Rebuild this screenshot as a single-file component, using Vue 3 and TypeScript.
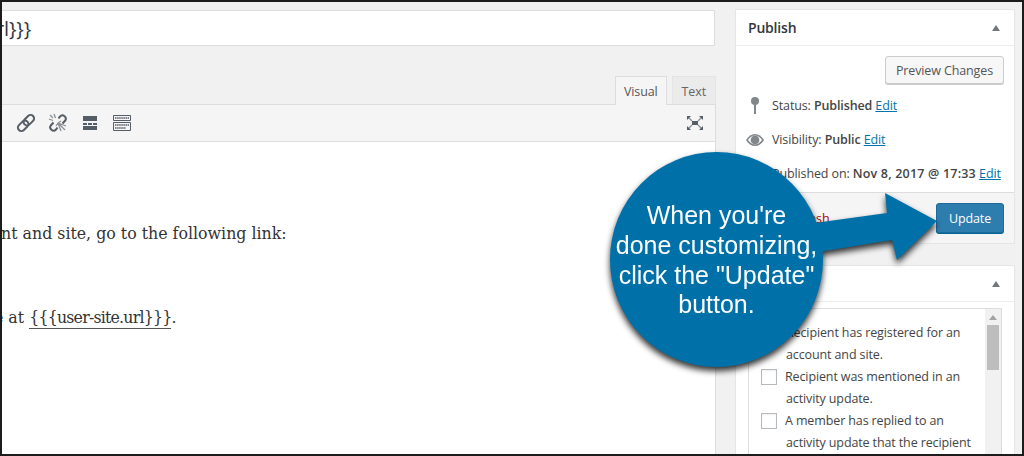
<script setup lang="ts">
interface Item { first: string; rest?: string }
const items: Item[] = [
  { first: 'Recipient was mentioned in an', rest: 'activity update.' },
  { first: 'A member has replied to an', rest: 'activity update that the recipient' },
]
const shortcode = '{{{user-site.url}}}'
</script>

<template>
  <div class="frame">
    <main class="editor-col">
      <div class="title-input"><span>rl}}}</span></div>
      <div class="tabs">
        <span class="tab active">Visual</span>
        <span class="tab">Text</span>
      </div>
      <div class="toolbar">
        <div class="tools">
          <svg class="ico" viewBox="0 0 20 20"><g transform="rotate(-45 10 10)" fill="none" stroke="#555d66" stroke-width="2"><rect x="0" y="6.500" width="12" height="7" rx="3.500"/><rect x="8" y="6.500" width="12" height="7" rx="3.500"/></g></svg>
          <svg class="ico" viewBox="0 0 20 20"><path d="M10.500 5.500l1.500-2a3.300 3.300 0 0 1 5 4.300l-2.500 2.700M9.500 14.500l-1.500 2a3.300 3.300 0 0 1-5-4.300l2.500-2.700" fill="none" stroke="#555d66" stroke-width="2"/><path d="M2 2l3 3M6 1l1.500 4M1 6l4 1.500M10 10l7 7M10 10l3 8M10 10l8 3M10 10l-2 3M10 10l3-2" fill="none" stroke="#8b9097" stroke-width="1.300"/></svg>
          <svg class="ico" viewBox="0 0 20 20"><path d="M3 3h14v5H3zM3 10h4v2H3zM8 10h4v2H8zM13 10h4v2h-4zM3 13h14v4H3z" fill="#555d66"/></svg>
          <svg class="ico" viewBox="0 0 20 20"><path d="M1.500 2.500h17v5h-17zM1.500 9.500h17v8h-17z" fill="none" stroke="#555d66"/><path d="M3 5h14M3 12h14M3 15h11" stroke="#555d66" stroke-dasharray="1.500 .6" stroke-width="1.500"/></svg>
        </div>
        <svg class="ico" viewBox="0 0 20 20"><path d="M7 8h6v4H7z" fill="#555d66"/><path d="M3 4l4 4M17 4l-4 4M3 16l4-4M17 16l-4-4" stroke="#8b9097" stroke-width="1.300"/><path d="M2 3h4L2 7zM18 3h-4l4 4zM2 17h4l-4-4zM18 17h-4l4-4z" fill="#555d66"/></svg>
      </div>
      <div class="content">
        <p class="line-a">nt and site, go to the following link:</p>
        <p class="line-b">e at <span class="shortcode">{{ shortcode }}</span>.</p>
      </div>
    </main>

    <aside class="side">
      <section class="box publish">
        <header class="box-head"><h2>Publish</h2><i class="caret"></i></header>
        <div class="preview-row"><button class="btn">Preview Changes</button></div>
        <div class="meta">
          <svg class="m-ico pin" viewBox="0 0 20 20"><circle cx="10" cy="6" r="4" fill="#82878c"/><path d="M10 8v11" stroke="#82878c" stroke-width="2"/></svg>
          <span>Status: <b>Published</b> <a>Edit</a></span>
        </div>
        <div class="meta">
          <svg class="m-ico eye" viewBox="0 0 20 20"><path d="M1 11c2.500-4 5.500-6 9-6s6.500 2 9 6c-2.500 4-5.500 6-9 6s-6.500-2-9-6z" fill="#82878c"/><path d="M3 11c2-2.700 4.300-4.400 7-4.400s5 1.700 7 4.400c-2 2.700-4.300 4.400-7 4.400S5 13.700 3 11z" fill="#fff"/><circle cx="10" cy="11" r="4.400" fill="#82878c"/></svg>
          <span>Visibility: <b>Public</b> <a>Edit</a></span>
        </div>
        <div class="meta">
          <span class="m-ico"></span>
          <span>Published on: <b class="date">Nov 8, 2017 @ 17:33</b> <a>Edit</a></span>
        </div>
        <div class="actions">
          <a class="trash">Move to Trash</a>
          <button class="btn primary">Update</button>
        </div>
      </section>

      <section class="box triggers">
        <header class="box-head"><h2>Triggers</h2><i class="caret"></i></header>
        <div class="scroller">
          <div class="list">
            <div class="item plain">
              <p>Recipient has registered for an</p>
              <p>account and site.</p>
            </div>
            <div v-for="it in items" :key="it.first" class="item">
              <p class="with-check"><i class="check"></i>{{ it.first }}</p>
              <p>{{ it.rest }}</p>
            </div>
          </div>
          <div class="bar"><i class="bar-up"></i><i class="thumb"></i></div>
        </div>
      </section>
    </aside>

    <div class="callout">
      <svg class="arrow" viewBox="0 0 340 240" width="340" height="240">
        <path d="M190 73L277 61 275 41 327 69 287 108 282 88 190 103z" fill="#0071a8"/>
      </svg>
      <div class="bubble">
        <span>When you're</span>
        <span>done customizing,</span>
        <span>click the "Update"</span>
        <span>button.</span>
      </div>
    </div>
  </div>
</template>

<style>
html, body { margin: 0; background: #f1f1f1; }
</style>

<style scoped>
.frame {
  position: relative;
  box-sizing: border-box;
  width: 1024px;
  height: 456px;
  overflow: hidden;
  border: 2px solid #1c1c1c;
  background: #f1f1f1;
  display: flex;
  align-items: flex-start;
  font-family: "Open Sans", "Noto Sans", sans-serif;
  font-size: 12.500px;
  letter-spacing: -.12px;
  color: #444;
}
.editor-col { width: 714px; height: 452px; padding-top: 8px; box-sizing: border-box; display: flex; flex-direction: column; flex: none; }
.title-input {
  height: 36px;
  box-sizing: border-box;
  margin-right: 1px;
  background: #fff;
  border: 1px solid #ddd;
  border-left: 0;
  font-size: 20px;
  line-height: 36px;
  color: #32373c;
  white-space: nowrap;
  overflow: hidden;
}
.title-input span { display: block; margin-left: -6px; }
.tabs { display: flex; justify-content: flex-end; gap: 5px; margin-top: 30px; height: 28px; }
.tab {
  box-sizing: border-box;
  height: 28px;
  padding: 0 9px;
  line-height: 30px;
  background: #ebebeb;
  border: 1px solid #e4e4e4;
  border-bottom: 0;
  color: #666;
}
.tab.active { background: #f5f5f5; border-color: #ddd; color: #555; height: 29px; padding: 0 8px; position: relative; z-index: 1; }
.toolbar {
  height: 38px;
  box-sizing: border-box;
  background: #f5f5f5;
  border: 1px solid #ddd;
  border-left: 0;
  display: flex;
  align-items: center;
  justify-content: space-between;
  padding: 0 10px 0 14px;
}
.tools { display: flex; gap: 12px; align-items: center; }
.ico { width: 20px; height: 20px; display: block; }
.content {
  flex: 1;
  background: #fff;
  border-right: 1px solid #ddd;
  font-family: "DejaVu Serif", serif;
  font-size: 15.800px;
  letter-spacing: 0;
  color: #333;
  white-space: nowrap;
  overflow: hidden;
}
.content p { margin: 0; line-height: 26px; }
.line-a { padding-top: 79px; margin-left: -1px !important; }
.line-b { padding-top: 58px; margin-left: -8px !important; }
.shortcode { border-bottom: 1px solid #555; padding-bottom: 1px; letter-spacing: -.8px; }

.side { width: 280px; margin-left: 19px; margin-top: 7px; flex: none; display: flex; flex-direction: column; gap: 21px; }
.box { background: #fff; border: 1px solid #e5e5e5; box-sizing: border-box; }
.box-head { height: 36px; box-sizing: border-box; border-bottom: 1px solid #eee; display: flex; align-items: center; justify-content: space-between; padding: 0 14px 0 12px; }
.box-head h2 { margin: 0; font-size: 14px; letter-spacing: -.2px; font-weight: 600; color: #32373c; }
.caret { width: 0; height: 0; border: 4px solid transparent; border-top: 0; border-bottom: 6px solid #72777c; }
.preview-row { display: flex; justify-content: flex-end; padding: 10px 10px 0; }
.btn {
  font: inherit;
  letter-spacing: inherit;
  height: 28px;
  padding: 0 10px;
  background: #f7f7f7;
  border: 1px solid #ccc;
  border-radius: 3px;
  box-shadow: 0 1px 0 #ccc;
  color: #555;
}
.meta { display: flex; align-items: center; height: 34px; white-space: nowrap; color: #444; }
.preview-row + .meta { margin-top: 4px; }
.m-ico { width: 20px; height: 20px; margin: 0 7px 0 9px; flex: none; display: block; }
.meta b { font-weight: 600; }
.meta b.date { letter-spacing: .2px; }
.meta a { color: #0073aa; text-decoration: underline; }
.actions {
  margin-top: 2px;
  height: 51px;
  box-sizing: border-box;
  background: #f5f5f5;
  border-top: 1px solid #ddd;
  display: flex;
  align-items: center;
  justify-content: space-between;
  padding: 0 10px 0 12px;
}
.trash { color: #a00; text-decoration: underline; }
.btn.primary { height: 30px; width: 68px; padding: 0; background: #2e7daf; border-color: #1e6a9b; box-shadow: 0 1px 0 #006799; color: #fff; }
.triggers { height: 200px; }
.scroller {
  margin: 6px 12px 0;
  height: 160px;
  border: 1px solid #ddd;
  display: flex;
  background: #fff;
}
.list { flex: 1; overflow: hidden; }
.item { padding-left: 37px; }
.item p { margin: 0; line-height: 22px; white-space: nowrap; color: #444; }
.item.plain { padding-top: 13px; }
.with-check { position: relative; margin-left: -1px !important; }
.check { position: absolute; left: -24px; top: 3px; box-sizing: border-box; width: 16px; height: 16px; border: 1px solid #b4b9be; background: #fff; box-shadow: inset 0 1px 2px rgba(0,0,0,.07); }
.bar { width: 16px; background: #f1f1f1; display: flex; flex-direction: column; align-items: center; }
.bar-up { margin: 6px 0 5px; width: 0; height: 0; border: 4px solid transparent; border-top: 0; border-bottom: 5px solid #a3a3a3; }
.thumb { width: 12px; height: 45px; background: #bdbdbd; }

.callout { position: absolute; left: 608px; top: 150px; width: 340px; height: 240px; filter: drop-shadow(0 4px 3px rgba(0,0,0,.8)); }
.arrow { position: absolute; left: 0; top: 0; }
.bubble {
  position: absolute;
  left: 0; top: 0;
  box-sizing: border-box;
  width: 213px;
  height: 215px;
  border-radius: 50%;
  background: #0071a8;
  color: #fff;
  font-family: "Liberation Sans", Arial, sans-serif;
  font-size: 25px;
  letter-spacing: 0;
  line-height: 29.700px;
  display: flex;
  flex-direction: column;
  align-items: center;
  justify-content: center;
  padding-top: 2px;
  white-space: nowrap;
}
</style>
